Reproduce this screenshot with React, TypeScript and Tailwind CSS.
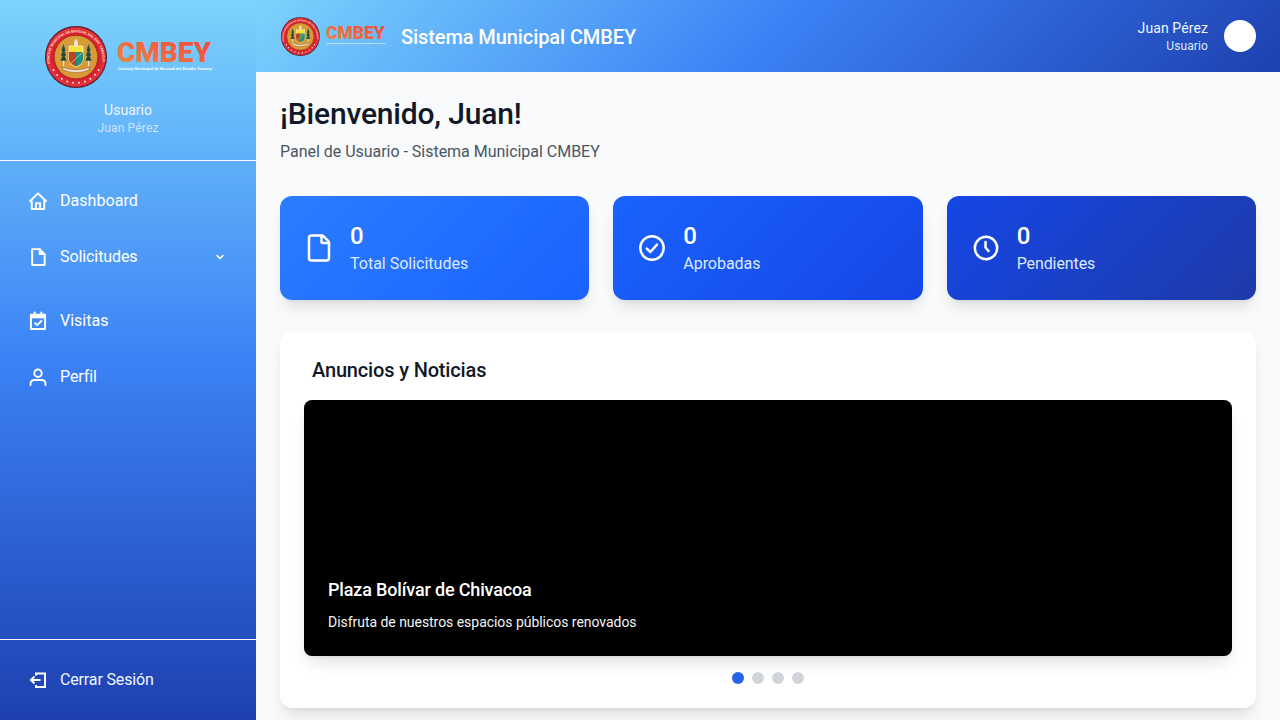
import { ChevronDown, File } from "lucide-react";

function Logo({ className }: { className: string }) {
  return (
    <svg viewBox="0 0 168 62" className={className}>
      <defs>
        <linearGradient id="cmbey" x1="0" y1="1" x2="1" y2="0">
          <stop offset="0" stopColor="#f28a3c" />
          <stop offset="1" stopColor="#f0443e" />
        </linearGradient>
        <radialGradient id="ring" cx="0.5" cy="0.5" r="0.5">
          <stop offset="0.74" stopColor="#d41f2e" />
          <stop offset="0.93" stopColor="#e8343c" />
          <stop offset="1" stopColor="#3a0f24" />
        </radialGradient>
        <path id="ringpath" d="M 5 38 A 26.5 26.5 0 1 1 57 38" fill="none" />
      </defs>
      <circle cx="31" cy="31" r="31" fill="url(#ring)" />
      <circle cx="31" cy="31" r="21.8" fill="#d89a35" stroke="#a8241f" strokeWidth="0.8" />
      <text fontFamily="Liberation Sans, sans-serif" fontSize="3.3" fontWeight="700" fill="#ffe6da">
        <textPath href="#ringpath">CONCEJO MUNICIPAL DE BRUZUAL DEL EDO. YARACUY</textPath>
      </text>
      {[0, 1, 2, 3, 4, 5, 6, 7, 8, 9].map((i) => {
        const a = (Math.PI * (30 + i * 13.3)) / 180;
        return <circle key={i} cx={31 + 26 * Math.cos(a)} cy={31 + 26 * Math.sin(a)} r="1" fill="#fff1ea" />;
      })}
      <g fill="#2a4a34" stroke="#e8e0c8" strokeWidth="0.3">
        <path d="M15 35 L17 30 L15.5 30 L17.2 25 L16 25 L18.5 17 L21 25 L19.8 25 L21.5 30 L20 30 L22 35 Z" />
        <path d="M40 35 L42 30 L40.5 30 L42.2 25 L41 25 L43.5 17 L46 25 L44.8 25 L46.5 30 L45 30 L47 35 Z" />
      </g>
      <rect x="18" y="35" width="1.2" height="5" fill="#f1e7d0" />
      <rect x="43" y="35" width="1.2" height="5" fill="#f1e7d0" />
      <path d="M29 20 Q28.5 14 31 13 Q33.5 14 33 20 Z" fill="#efe0c8" />
      <path d="M24 20 H38 V33 Q38 38 31 41 Q24 38 24 33 Z" fill="#f7e23a" stroke="#f4efe0" strokeWidth="0.7" />
      <path d="M24 26 H31 V40.5 Q24 38 24 33 Z" fill="#b8452a" />
      <path d="M31 26 H38 V33 Q38 38 31 40.5 Z" fill="#1c8f84" />
      <path d="M38 26 L24 39" stroke="#e8d060" strokeWidth="0.8" />
      <path d="M17 41 Q31 47 45 41 L43.5 44 Q31 49 18.5 44 Z" fill="#f3ead8" stroke="#7a2a20" strokeWidth="0.4" />
      <text x="72" y="35.5" fontFamily="Roboto, sans-serif" fontSize="28" fontWeight="900" fill="url(#cmbey)" textLength="94" lengthAdjust="spacingAndGlyphs">CMBEY</text>
      <text x="73" y="43.5" fontFamily="Liberation Sans, sans-serif" fontSize="3.6" fontWeight="700" fill="#ffffff" textLength="94" lengthAdjust="spacingAndGlyphs">Consejo Municipal de Bruzual del Estado Yaracuy</text>
    </svg>
  );
}

const stroke = { fill: "none", stroke: "currentColor", strokeWidth: 2.3, strokeLinejoin: "round" as const, strokeLinecap: "round" as const };

function HomeIcon() {
  return (
    <svg viewBox="0 0 24 24" className="w-5 h-5" {...stroke}>
      <path d="M2.5 12 L12 2.8 L21.5 12 H19.5 V21.5 H4.5 V12 Z" />
      <path d="M9.5 21.5 V14.5 H14.5 V21.5" />
    </svg>
  );
}

function FileIcon() {
  return (
    <svg viewBox="0 0 24 24" className="w-5 h-5" {...stroke}>
      <path d="M5 2.5 H14 L20 8.5 V21.5 H5 Z" />
      <path d="M14 2.5 V8.5 H20" fill="currentColor" />
    </svg>
  );
}

function CalendarIcon() {
  return (
    <svg viewBox="0 0 24 24" className="w-5 h-5" {...stroke}>
      <rect x="3.5" y="4.5" width="17" height="17" />
      <path d="M3.5 7 H20.5" strokeWidth="3.6" strokeLinecap="butt" />
      <path d="M8 1.8 V4 M16 1.8 V4" />
      <path d="M8.5 14.5 L11 17 L16 12" />
    </svg>
  );
}

function UserIcon() {
  return (
    <svg viewBox="0 0 24 24" className="w-5 h-5" {...stroke}>
      <circle cx="12" cy="7.5" r="4.5" />
      <path d="M3 21.5 V20 Q3 15.5 8 15.5 H16 Q21 15.5 21 20 V21.5" />
    </svg>
  );
}

function LogoutIcon() {
  return (
    <svg viewBox="0 0 20 20" className="w-5 h-5" fill="none" stroke="currentColor" strokeWidth="2">
      <path d="M8 5.5 V3.5 H17 V17 H8 V15" />
      <path d="M12.5 10 H3 M6.5 6.5 L3 10 L6.5 13.5" />
    </svg>
  );
}

function CheckCircleIcon() {
  return (
    <svg viewBox="0 0 30 30" className="w-[30px] h-[30px]" {...stroke} strokeWidth={2.5}>
      <circle cx="15" cy="15" r="11.7" />
      <path d="M9.8 15.6 L13.4 19 L20 11.6" />
    </svg>
  );
}

function ClockIcon() {
  return (
    <svg viewBox="0 0 30 30" className="w-[30px] h-[30px]" {...stroke} strokeWidth={2.5}>
      <circle cx="15" cy="15" r="11.2" />
      <path d="M14.5 9 V14.5 L17.5 18" />
    </svg>
  );
}

function NavItem({ icon, label, chevron, tracking }: { icon: React.ReactNode; label: string; chevron?: boolean; tracking?: string }) {
  return (
    <a className="flex items-center h-10 px-7 gap-3 text-white">
      <span className="w-5 h-5 flex items-center justify-center">{icon}</span>
      <span className={`text-base flex-1 ${tracking ?? ""}`}>{label}</span>
      {chevron && <ChevronDown className="w-3 h-3 mr-[2px]" strokeWidth={3} />}
    </a>
  );
}

function Stat({ icon, value, label, bg, tracking }: { icon: React.ReactNode; value: string; label: string; bg: string; tracking?: string }) {
  return (
    <div className={`h-[104px] rounded-xl shadow-lg flex items-center px-6 gap-4 text-white ${bg}`}>
      <span className="w-[30px] h-[30px] flex items-center justify-center">{icon}</span>
      <div>
        <div className="text-2xl font-medium leading-8">{value}</div>
        <div className={`text-base leading-6 text-[#dbeafe] ${tracking ?? ""}`}>{label}</div>
      </div>
    </div>
  );
}

export default function App() {
  return (
    <div className="flex h-screen overflow-hidden bg-[#f9fafb] font-['Roboto',sans-serif]">
      <aside className="w-64 shrink-0 flex flex-col bg-[linear-gradient(180deg,#7dd3fc,#3b82f6_50%,#1e40af)] text-white">
        <div className="h-[161px] border-b border-white flex flex-col items-center pt-[26px]">
          <Logo className="w-[168px] h-[62px] ml-[1px]" />
          <div className="mt-[12px] text-sm leading-5 text-[#eff6ff]">Usuario</div>
          <div className="text-xs leading-4 text-[#cfe3fd] tracking-[0.15px]">Juan Pérez</div>
        </div>
        <nav className="flex-1 flex flex-col pt-5">
          <NavItem icon={<HomeIcon />} label="Dashboard" tracking="tracking-[0.05px]" />
          <div className="h-4" />
          <NavItem icon={<FileIcon />} label="Solicitudes" chevron tracking="tracking-[-0.09px]" />
          <div className="h-6" />
          <NavItem icon={<CalendarIcon />} label="Visitas" />
          <div className="h-4" />
          <NavItem icon={<UserIcon />} label="Perfil" tracking="tracking-[-0.1px]" />
        </nav>
        <div className="h-[81px] border-t border-white flex items-center">
          <a className="flex items-center h-10 px-7 gap-3 w-full text-[#eff6ff]">
            <span className="w-5 h-5 flex items-center justify-center text-white"><LogoutIcon /></span>
            <span className="text-base tracking-[-0.15px]">Cerrar Sesión</span>
          </a>
        </div>
      </aside>
      <div className="flex-1 min-w-0 flex flex-col">
        <header className="h-[72px] shrink-0 flex items-center px-6 bg-[linear-gradient(135deg,#7dd3fc,#3b82f6_50%,#1e40af)] text-white">
          <Logo className="w-[105px] h-[39px] ml-px" />
          <h2 className="ml-[15px] mt-px text-xl font-medium tracking-[-0.09px]">Sistema Municipal CMBEY</h2>
          <div className="ml-auto flex items-center gap-4">
            <div className="text-right">
              <div className="text-sm leading-5 text-[#eff6ff] tracking-[0.1px]">Juan Pérez</div>
              <div className="text-xs leading-4 text-[#dbeafe] tracking-[0.1px]">Usuario</div>
            </div>
            <div className="w-8 h-8 rounded-full bg-white" />
          </div>
        </header>
        <main className="flex-1 p-6">
          <h1 className="text-3xl font-medium text-[#111827] leading-9 tracking-[-0.18px]">¡Bienvenido, Juan!</h1>
          <p className="mt-2 text-base leading-6 text-[#4b5563] tracking-[-0.025px]">Panel de Usuario - Sistema Municipal CMBEY</p>
          <div className="mt-8 grid grid-cols-3 gap-6">
            <Stat bg="bg-[linear-gradient(135deg,#2b7dff,#1a62ff)]" icon={<File className="w-[30px] h-[30px]" strokeWidth={2} />} value="0" label="Total Solicitudes" />
            <Stat bg="bg-[linear-gradient(135deg,#1a62ff,#1546e5)]" icon={<CheckCircleIcon />} value="0" label="Aprobadas" tracking="tracking-[-0.05px]" />
            <Stat bg="bg-[linear-gradient(135deg,#1546e5,#1e3aa8)]" icon={<ClockIcon />} value="0" label="Pendientes" tracking="tracking-[-0.1px]" />
          </div>
          <section className="mt-8 h-[376px] bg-white rounded-xl shadow-lg px-6 pt-6">
            <h3 className="px-2 text-xl font-medium leading-7 text-[#111827] tracking-[-0.16px]">Anuncios y Noticias</h3>
            <div className="mt-[16px] h-64 bg-black rounded-lg shadow-lg flex flex-col justify-end px-6 pb-6 text-white">
              <div className="text-lg font-medium leading-7 tracking-[-0.16px]">Plaza Bolívar de Chivacoa</div>
              <div className="mt-2 text-sm leading-5 text-[#f3f4f6] tracking-[-0.04px]">Disfruta de nuestros espacios públicos renovados</div>
            </div>
            <div className="mt-4 flex justify-center gap-2">
              <span className="w-3 h-3 rounded-full bg-[#2563eb]" />
              <span className="w-3 h-3 rounded-full bg-[#d1d5db]" />
              <span className="w-3 h-3 rounded-full bg-[#d1d5db]" />
              <span className="w-3 h-3 rounded-full bg-[#d1d5db]" />
            </div>
          </section>
        </main>
      </div>
    </div>
  );
}
